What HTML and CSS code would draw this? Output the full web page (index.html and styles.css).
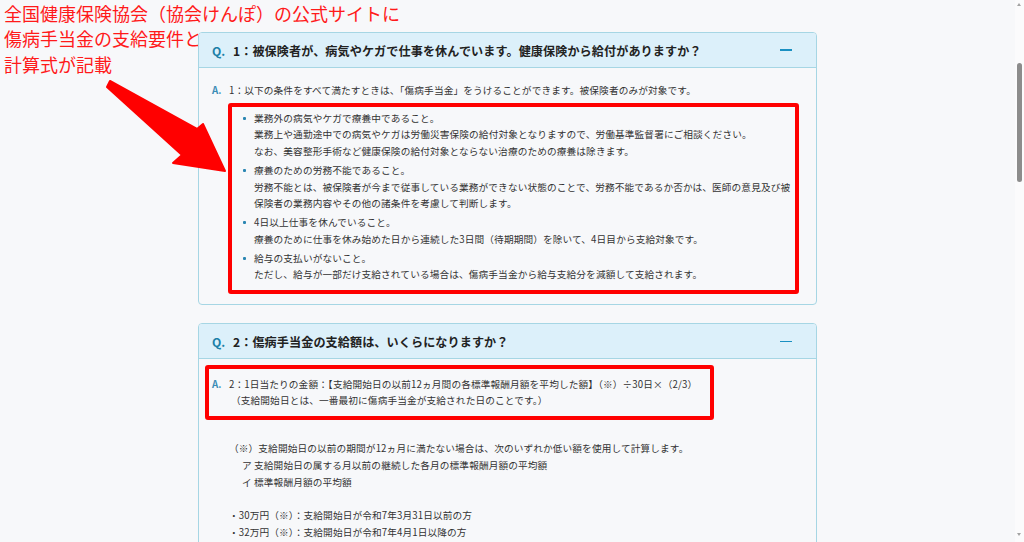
FILE: index.html
```html
<!DOCTYPE html>
<html lang="ja">
<head>
<meta charset="utf-8">
<title>傷病手当金 FAQ</title>
<link rel="stylesheet" href="styles.css">
</head>
<body>
<p class="annotation">全国健康保険協会（協会けんぽ）の公式サイトに<br>傷病手当金の支給要件と<br>計算式が記載</p>

<div class="page">
  <div class="faq">
    <section class="card">
      <header class="card-head">
        <span class="q">Q.</span>
        <h2>1：被保険者が、病気やケガで仕事を休んでいます。健康保険から給付がありますか？</h2>
        <span class="toggle"></span>
      </header>
      <div class="card-body card-body-1">
        <div class="answer">
          <span class="a">A.</span>
          <div class="answer-text">
            <p>1：以下の条件をすべて満たすときは、「傷病手当金」をうけることができます。被保険者のみが対象です。</p>
            <div class="mark mark-list">
              <ul>
                <li>業務外の病気やケガで療養中であること。<br>業務上や通勤途中での病気やケガは労働災害保険の給付対象となりますので、労働基準監督署にご相談ください。<br>なお、美容整形手術など健康保険の給付対象とならない治療のための療養は除きます。</li>
                <li>療養のための労務不能であること。<br>労務不能とは、被保険者が今まで従事している業務ができない状態のことで、労務不能であるか否かは、医師の意見及び被保険者の業務内容やその他の諸条件を考慮して判断します。</li>
                <li>4日以上仕事を休んでいること。<br>療養のために仕事を休み始めた日から連続した3日間（待期期間）を除いて、4日目から支給対象です。</li>
                <li>給与の支払いがないこと。<br>ただし、給与が一部だけ支給されている場合は、傷病手当金から給与支給分を減額して支給されます。</li>
              </ul>
            </div>
          </div>
        </div>
      </div>
    </section>

    <section class="card">
      <header class="card-head">
        <span class="q">Q.</span>
        <h2>2：傷病手当金の支給額は、いくらになりますか？</h2>
        <span class="toggle"></span>
      </header>
      <div class="card-body card-body-2">
        <div class="mark mark-answer">
          <div class="answer">
            <span class="a">A.</span>
            <div class="answer-text">
              <p>2：1日当たりの金額：【支給開始日の以前12ヵ月間の各標準報酬月額を平均した額】（※）÷30日×（2/3）</p>
              <p class="indent">（支給開始日とは、一番最初に傷病手当金が支給された日のことです。）</p>
            </div>
          </div>
        </div>
        <div class="note">
          <p>（※）支給開始日の以前の期間が12ヵ月に満たない場合は、次のいずれか低い額を使用して計算します。</p>
          <p class="sub">ア 支給開始日の属する月以前の継続した各月の標準報酬月額の平均額</p>
          <p class="sub">イ 標準報酬月額の平均額</p>
          <p class="spaced">・30万円（※）：支給開始日が令和7年3月31日以前の方</p>
          <p>・32万円（※）：支給開始日が令和7年4月1日以降の方</p>
          <p>※当該年度の前年度9月30日における全被保険者の同月の標準報酬月額を平均した額</p>
        </div>
      </div>
    </section>
  </div>
</div>

<svg class="arrow" width="240" height="180" viewBox="0 0 240 180" aria-hidden="true">
  <path d="M110 81 L197 129 L203 124 L225 171 L173 163 L182 155 L107 87 Z" fill="#ff0000" stroke="#ff0000" stroke-width="2" stroke-linejoin="round"/>
</svg>

<div class="scrollbar" aria-hidden="true">
  <span class="sb-up"></span>
  <span class="sb-thumb"></span>
  <span class="sb-down"></span>
</div>
</body>
</html>
```

FILE: styles.css
```css
html, body {
  margin: 0;
  height: 542px;
  overflow: hidden;
}

body {
  background: #f7f8fa;
  font-family: "Noto Sans CJK JP", "Noto Sans", sans-serif;
  color: #333;
  position: relative;
}

.annotation {
  position: absolute;
  left: 4px;
  top: 1px;
  margin: 0;
  font-size: 18px;
  line-height: 25.3px;
  color: #ff1a1a;
  z-index: 0;
}

.page {
  width: 1015px;
  padding-top: 32px;
}

.faq {
  width: 619px;
  margin: 0 auto;
  display: flex;
  flex-direction: column;
  gap: 18px;
}

.card {
  position: relative;
  z-index: 1;
  box-sizing: border-box;
  border: 1px solid #a6d6e4;
  border-radius: 4px;
  background: #f7f8fa;
  overflow: hidden;
}

.card-head {
  display: flex;
  align-items: center;
  height: 34px;
  padding: 0 24px 0 13px;
  background: #dcf0fa;
  border-bottom: 1px solid #a6d6e4;
}

.q {
  flex: none;
  width: 21px;
  font-size: 12.1px;
  font-weight: 700;
  color: #1b7fa7;
}

.card-head h2 {
  flex: 1;
  margin: 0;
  font-size: 12.1px;
  letter-spacing: 0.1px;
  font-weight: 700;
  color: #222;
}

.toggle {
  flex: none;
  width: 12px;
  height: 1.5px;
  background: #1a90c2;
}

.card-body {
  font-size: 9.67px;
  letter-spacing: 0.12px;
  line-height: 16.6px;
}

.card-body-1 {
  padding: 13.6px 17px 10px 13px;
}

.card-body-2 {
  padding: 6px 17px 0 6px;
}

.answer {
  display: flex;
}

.a {
  flex: none;
  width: 17px;
  color: #3a8cb6;
  font-weight: 700;
  letter-spacing: 0;
}

.answer-text {
  flex: 1;
}

.answer-text p {
  margin: 0;
}

.answer-text .indent {
  padding-left: 2px;
}

.mark {
  border: 4px solid #ff0000;
  border-radius: 3px;
}

.mark-list {
  margin: 5px 0 0 -1px;
  padding: 2.7px 0 7.7px 0;
}

.mark-list ul {
  margin: 0;
  padding: 0;
  list-style: none;
  display: flex;
  flex-direction: column;
  gap: 2.3px;
}

.mark-list li {
  position: relative;
  padding-left: 22px;
}

.mark-list li::before {
  content: "";
  position: absolute;
  left: 11px;
  top: 7px;
  width: 3px;
  height: 3px;
  border-radius: 1px;
  background: #2a86b2;
}

.mark-answer {
  box-sizing: border-box;
  width: 509px;
  padding: 6.2px 4px 7.7px 3px;
}

.note {
  margin-top: 20px;
  padding-left: 24px;
}

.note p {
  margin: 0;
}

.note .sub {
  padding-left: 13px;
}

.note .spaced {
  margin-top: 17px;
}

.arrow {
  position: absolute;
  left: 0;
  top: 0;
  z-index: 2;
}

.scrollbar {
  position: fixed;
  top: 0;
  right: 0;
  width: 9px;
  height: 542px;
  background: #fbfbfc;
  z-index: 3;
}

.sb-up,
.sb-down {
  position: absolute;
  left: 2px;
  width: 0;
  height: 0;
  border-left: 2.5px solid transparent;
  border-right: 2.5px solid transparent;
}

.sb-up {
  top: 3px;
  border-bottom: 3px solid #a3a3a3;
}

.sb-down {
  bottom: 6px;
  border-top: 3px solid #a3a3a3;
}

.sb-thumb {
  position: absolute;
  left: 2px;
  top: 63px;
  width: 5px;
  height: 119px;
  border-radius: 3px;
  background: #8c8c8c;
}
```
